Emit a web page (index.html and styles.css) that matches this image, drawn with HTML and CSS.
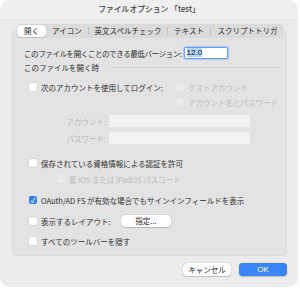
FILE: index.html
```html
<!DOCTYPE html>
<html>
<head>
    <title>ファイルオプション</title>
    <meta charset="UTF-8">
    <link rel="stylesheet" href="styles.css">
</head>
<body>
    <div class="window">
        <div class="titlebar">ファイルオプション 「test」</div>
        <div class="tabbox">
            <div class="tabs">
                <span class="tab t1 active">開く</span>
                <span class="tab t2">アイコン</span>
                <span class="tab t3">英文スペルチェック</span>
                <span class="tab t4">テキスト</span>
                <span class="tab t5">スクリプトトリガ</span>
            </div>
            <div class="panel">
                <div class="row version">
                    <span class="version-text">このファイルを開くことのできる最低バージョン:</span>
                    <span class="field focus"><span class="sel">12.0</span></span>
                </div>
                <div class="row heading">
                    <span>このファイルを開く時</span>
                    <span class="rule"></span>
                </div>
                <div class="login">
                    <label class="check login-check"><span class="box"></span>次のアカウントを使用してログイン:</label>
                    <div class="radios">
                        <label class="radio disabled"><span class="dot"></span>ゲストアカウント</label>
                        <label class="radio disabled"><span class="dot"></span>アカウント名とパスワード</label>
                    </div>
                </div>
                <div class="cred account">
                    <span class="lbl">アカウント:</span>
                    <span class="field wide"></span>
                </div>
                <div class="cred password">
                    <span class="lbl">パスワード:</span>
                    <span class="field wide"></span>
                </div>
                <label class="check saved"><span class="box"></span>保存されている資格情報による認証を許可</label>
                <label class="check sub disabled"><span class="box"></span>要 iOS または iPadOS パスコード</label>
                <label class="check oauth"><span class="box on">✓</span>OAuth/AD FS が有効な場合でもサインインフィールドを表示</label>
                <div class="check layout">
                    <span class="box"></span><span class="layout-text">表示するレイアウト:</span>
                    <span class="btn small">指定...</span>
                </div>
                <label class="check toolbar"><span class="box"></span>すべてのツールバーを隠す</label>
            </div>
        </div>
        <div class="footer">
            <span class="btn">キャンセル</span>
            <span class="btn primary">OK</span>
        </div>
    </div>
</body>
</html>
```

FILE: styles.css
```css
body {
    margin: 0;
    background: #ffffff;
    font-family: "Noto Sans CJK JP", "Noto Sans", sans-serif;
    font-size: 7.5px;
    color: #2e2e2e;
}
.window {
    width: 298px;
    height: 287px;
    background: #ececec;
    border-radius: 10px;
    overflow: hidden;
    display: flex;
    flex-direction: column;
    white-space: nowrap;
}
.titlebar {
    height: 19px;
    line-height: 17px;
    text-align: center;
    font-size: 7.8px;
    font-weight: 500;
    color: #3c3c3c;
    background: #efefef;
    border-bottom: 1px solid #e4e4e4;
}
.tabbox {
    margin: 4px 11px 0 12px;
    position: relative;
}
.tabs {
    position: absolute;
    top: 0;
    left: 4px;
    width: 268px;
    height: 14px;
    background: #dbdbdb;
    border-radius: 5px;
    display: flex;
    align-items: center;
    z-index: 1;
}
.tab {
    height: 12px;
    line-height: 12px;
    text-align: center;
    color: #2c2c2c;
    border-radius: 4px;
    box-sizing: border-box;
}
.tab.active {
    background: #ffffff;
    box-shadow: 0 0 1px rgba(0,0,0,0.3), 0 0.5px 1px rgba(0,0,0,0.1);
}
.t1 { width: 29px; margin-left: 1px; }
.t2 { width: 42px; }
.t3, .t4, .t5 {
    border-left: 1px solid #c2c2c2;
    border-radius: 0;
    height: 8px;
    line-height: 8px;
}
.t3 { width: 79px; }
.t4 { width: 43px; }
.t5 { width: 74px; }
.panel {
    margin-top: 6px;
    height: 226px;
    background: #e3e3e3;
    border: 1px solid #dcdcdc;
    border-radius: 5px;
    padding: 15px 0 0 11px;
    box-sizing: border-box;
}
.row {
    display: flex;
    align-items: center;
    height: 14px;
}
.version-text {
    letter-spacing: -0.4px;
}
.field {
    display: inline-block;
    height: 12px;
    background: #f2f2f2;
    box-sizing: border-box;
}
.field.focus {
    width: 44px;
    margin-left: 2px;
    background: #ffffff;
    border: 1px solid #6d9ff0;
    box-shadow: 0 0 0 1px #aac7f5;
    border-radius: 2px;
    padding-left: 2px;
    line-height: 10px;
    font-family: "Liberation Sans", sans-serif;
    font-size: 8px;
}
.sel {
    background: #b5d2f9;
    color: #111111;
}
.rule {
    flex: 1;
    height: 1px;
    background: #d3d3d3;
    margin: 0 8px 0 11px;
}
.check {
    display: flex;
    align-items: center;
    height: 14px;
    margin-left: 5px;
}
.box {
    width: 8px;
    height: 8px;
    background: #ffffff;
    border-radius: 2px;
    box-shadow: 0 0 0 0.5px #cfcfcf;
    margin-right: 4px;
    flex: none;
    color: #ffffff;
    font-size: 7px;
    line-height: 8px;
    text-align: center;
}
.box.on {
    background: #2f7cf6;
    box-shadow: none;
    font-weight: bold;
}
.disabled {
    color: #bcbcbc;
}
.disabled .box, .dot {
    background: #ebebeb;
    box-shadow: none;
}
.login {
    display: flex;
    margin-top: 6px;
}
.login-check {
    width: 147px;
}
.radio {
    display: flex;
    align-items: center;
    height: 14px;
}
.radio + .radio {
    margin-top: 1px;
}
.dot {
    width: 8px;
    height: 8px;
    border-radius: 50%;
    margin-right: 4px;
}
.cred {
    display: flex;
    align-items: center;
    height: 14px;
    color: #b8b8b8;
}
.account { margin-top: 5px; }
.password { margin-top: 3px; }
.lbl {
    width: 82px;
    text-align: right;
    padding-right: 3px;
}
.field.wide {
    width: 141px;
}
.saved { margin-top: 11px; }
.check.sub {
    margin-left: 33px;
    margin-top: 2px;
}
.oauth { margin-top: 7px; }
.layout { margin-top: 7px; }
.toolbar { margin-top: 6px; }
.layout-text {
    width: 80px;
}
.btn {
    display: inline-block;
    background: #ffffff;
    border-radius: 4px;
    box-shadow: 0 0 1px rgba(0,0,0,0.35), 0 0.5px 1px rgba(0,0,0,0.15);
    text-align: center;
    line-height: 12px;
    height: 12px;
    color: #2a2a2a;
}
.btn.small {
    width: 50px;
}
.footer {
    display: flex;
    justify-content: flex-end;
    gap: 8px;
    padding: 7px 11px 0 0;
}
.footer .btn {
    width: 48px;
    height: 13px;
    line-height: 13px;
}
.btn.primary {
    background: #3a85f6;
    color: #ffffff;
    font-family: "Liberation Sans", sans-serif;
    font-size: 8px;
}
```
